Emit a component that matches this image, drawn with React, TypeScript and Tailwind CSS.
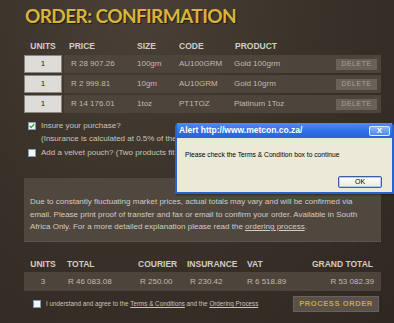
const items = [
  { units: 1, price: "R 28 907.26", size: "100gm", code: "AU100GRM", product: "Gold 100grm" },
  { units: 1, price: "R 2 999.81", size: "10gm", code: "AU10GRM", product: "Gold 10grm" },
  { units: 1, price: "R 14 176.01", size: "1toz", code: "PT1TOZ", product: "Platinum 1Toz" },
];

function CheckBox({ checked = false }: { checked?: boolean }) {
  return (
    <span className="flex h-[8px] w-[8px] shrink-0 items-center justify-center border border-[#7f9db9] bg-[#f4f4f0]">
      {checked && (
        <svg viewBox="0 0 8 8" className="h-[6px] w-[6px]">
          <path d="M1 4 L3 6 L7 1.5" fill="none" stroke="#21a121" strokeWidth="1.6" />
        </svg>
      )}
    </span>
  );
}

function AlertBox() {
  return (
    <div className="absolute left-[175px] top-[123px] h-[71px] w-[219px] rounded-t-[4px] bg-[#2a62d6] p-[2px] pt-0 font-['Liberation_Sans',Arial,sans-serif] shadow-[1px_1px_2px_rgba(0,0,0,0.4)]">
      <div className="flex h-[15px] items-center justify-between bg-[linear-gradient(#4b8ef4,#2f6fe6_55%,#2a62d6)] pl-[2px] pr-[2px]">
        <span className="text-[8.5px] font-bold text-white">Alert http://www.metcon.co.za/</span>
        <span className="flex h-[10px] w-[21px] items-center justify-center rounded-[2px] border border-white/80 bg-[linear-gradient(#8ab8fa,#4d8af0)] text-[8px] font-bold leading-none text-white">
          X
        </span>
      </div>
      <div className="flex h-[54px] flex-col bg-[#ece9d8] px-[8px] pt-[12px]">
        <p className="text-[6.7px] leading-[9px] text-black">Please check the Terms &amp; Condition box to continue</p>
        <div className="mt-auto mb-[4px] flex justify-end pr-[2px]">
          <span className="flex h-[12px] w-[44px] items-center justify-center rounded-[2px] border border-[#3c5ea8] bg-[linear-gradient(#ffffff,#ebe9e0)] text-[7px] text-black shadow-[inset_0_0_0_1px_#b4c8f0]">
            OK
          </span>
        </div>
      </div>
    </div>
  );
}

export default function App() {
  return (
    <div className="relative h-[323px] w-[394px] overflow-hidden bg-[#3a3129] bg-[radial-gradient(ellipse_at_35%_0%,#4a4037_0%,#3b322a_45%,#2f2721_100%)] font-['Liberation_Sans',Arial,sans-serif]">
      <h1 className="pl-[25px] pt-[2px] font-['Lato',sans-serif] text-[19px] font-bold leading-[28px] tracking-[-0.6px] text-[#d9b43a] [text-shadow:1px_1px_1px_rgba(0,0,0,0.6)]">
        ORDER: CONFIRMATION
      </h1>

      <div className="mt-[10px] pl-[24px] pr-[13px]">
        <div className="flex h-[12px] items-center text-[8.5px] font-bold text-[#d2cdc6]">
          <span className="w-[38px] text-center">UNITS</span>
          <span className="w-[75px] pl-[7px]">PRICE</span>
          <span className="w-[42px]">SIZE</span>
          <span className="w-[56px]">CODE</span>
          <span>PRODUCT</span>
        </div>

        <div className="mt-[3px] flex flex-col gap-[2px]">
          {items.map((it) => (
            <div key={it.code} className="flex h-[18px] gap-[2px]">
              <span className="flex w-[38px] items-center justify-center border border-[#8c867e] bg-[#dedcd8] text-[8px] text-[#222]">
                {it.units}
              </span>
              <div className="flex flex-1 items-center bg-[#4d443b] text-[8px] text-[#c2bab0]">
                <span className="w-[73px] pl-[7px]">{it.price}</span>
                <span className="w-[42px]">{it.size}</span>
                <span className="w-[55px]">{it.code}</span>
                <span className="flex-1">{it.product}</span>
                <span className="mr-[4px] flex h-[11px] w-[41px] items-center justify-center bg-[#6a6158] text-[6.5px] tracking-[0.8px] text-[#aaa298]">
                  DELETE
                </span>
              </div>
            </div>
          ))}
        </div>

        <div className="mt-[6px] flex flex-col pl-[4px] text-[8px] text-[#cbc4bb]">
          <div className="flex h-[13px] items-center gap-[5px]">
            <CheckBox checked />
            <span className="whitespace-nowrap">Insure your purchase?</span>
          </div>
          <div className="flex h-[13px] items-center whitespace-nowrap pl-[13px]">
            (Insurance is calculated at 0.5% of the total order value)
          </div>
          <div className="mt-[1px] flex h-[13px] items-center gap-[5px]">
            <CheckBox />
            <span className="whitespace-nowrap">Add a velvet pouch? (Two products fit in one pouch)</span>
          </div>
        </div>

        <div className="mt-[19px] h-[64px] border-b border-dotted border-[#6a6157] bg-[#50473e] px-[6px] pt-[18px] text-[8px] leading-[12.5px] text-[#d2cbc2]">
          Due to constantly fluctuating market prices, actual totals may vary and will be confirmed via email. Please
          print proof of transfer and fax or email to confirm your order. Available in South Africa Only. For a more
          detailed explanation please read the <span className="underline">ordering process</span>.
        </div>

        <div className="mt-[16px] flex h-[12px] items-center text-[8.5px] font-bold text-[#d2cdc6]">
          <span className="w-[38px] text-center">UNITS</span>
          <span className="w-[76px] pl-[5px]">TOTAL</span>
          <span className="w-[49px]">COURIER</span>
          <span className="w-[60px]">INSURANCE</span>
          <span className="flex-1">VAT</span>
          <span className="pr-[8px]">GRAND TOTAL</span>
        </div>

        <div className="mt-[2px] flex h-[19px] items-center bg-[#4d443b] text-[8px] text-[#c2bab0]">
          <span className="w-[38px] text-center">3</span>
          <span className="w-[76px] pl-[6px]">R 46 083.08</span>
          <span className="w-[49px] pl-[2px]">R 250.00</span>
          <span className="w-[60px] pl-[3px]">R 230.42</span>
          <span className="flex-1">R 6 518.89</span>
          <span className="pr-[7px]">R 53 082.39</span>
        </div>

        <div className="mt-[5px] flex h-[16px] items-center">
          <div className="flex items-center gap-[5px] pl-[9px] text-[6.3px] text-[#cbc4bb]">
            <CheckBox />
            <span className="whitespace-nowrap">
              I understand and agree to the <span className="underline">Terms &amp; Conditions</span> and the{" "}
              <span className="underline">Ordering Process</span>
            </span>
          </div>
          <span className="ml-auto mr-[2px] flex h-[16px] w-[86px] items-center justify-center border border-[#6a625a] bg-[#58504a] text-[7.5px] font-bold tracking-[0.6px] text-[#c9a83c]">
            PROCESS ORDER
          </span>
        </div>
      </div>

      <AlertBox />
    </div>
  );
}
